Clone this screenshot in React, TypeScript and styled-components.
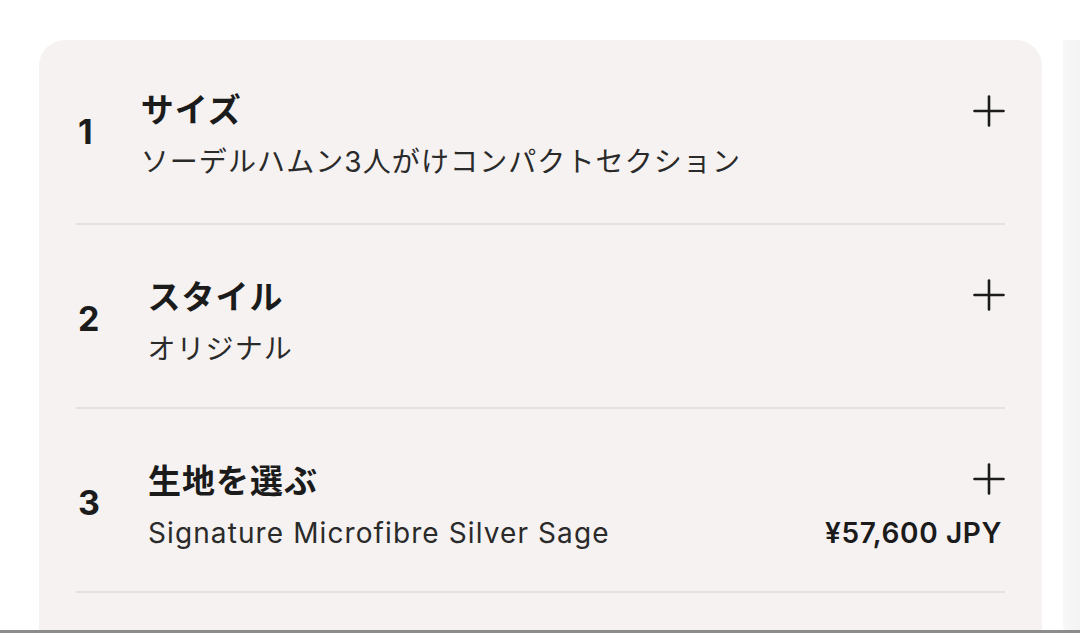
import React from "react"
import styled, { createGlobalStyle } from "styled-components"

const GlobalStyle = createGlobalStyle`
    html, body {
        margin: 0;
        padding: 0;
        background: #ffffff;
    }
    body {
        font-family: "Inter", "Noto Sans CJK JP", sans-serif;
        color: #1b1b1b;
    }
`

const Page = styled.div`
    width: 1080px;
    height: 633px;
    display: flex;
    flex-direction: column;
    overflow: hidden;
`

const Viewport = styled.div`
    flex-grow: 1;
    display: flex;
    flex-direction: row;
    overflow: hidden;
    padding-top: 40px;
`

const Panel = styled.div`
    width: 1003px;
    margin-left: 39px;
    padding: 0 37px;
    box-sizing: border-box;
    background: #f5f2f1;
    border-radius: 26px 26px 0 0;
`

const Gutter = styled.div`
    flex-grow: 1;
`

const Scrollbar = styled.div`
    width: 17px;
    background: linear-gradient(to right, #f8f8f8, #f3f3f3);
`

const BottomEdge = styled.div`
    height: 3px;
    background: #8c8c8c;
`

const Row = styled.div<{ $first?: boolean }>`
    display: flex;
    flex-direction: row;
    align-items: center;
    gap: 48px;
    padding: ${(p) => (p.$first ? "46px 0 39px" : "48px 0 36px")};
    border-bottom: 2px solid #e4e1e0;
`

const Step = styled.div`
    font-family: "Inter", sans-serif;
    font-weight: 700;
    font-size: 34px;
    line-height: 40px;
    padding-left: 2px;
    margin-top: -6px;
`

const Body = styled.div`
    flex-grow: 1;
    display: flex;
    flex-direction: column;
    gap: 10px;
`

const Line = styled.div`
    display: flex;
    flex-direction: row;
    justify-content: space-between;
    align-items: center;
    height: 44px;
`

const Title = styled.div`
    font-family: "Noto Sans CJK JP", sans-serif;
    font-weight: 700;
    font-size: 33px;
    letter-spacing: 1px;
    line-height: 44px;
`

const Subtitle = styled.div`
    font-family: "Inter", "Noto Sans CJK JP", sans-serif;
    font-weight: 400;
    font-size: 28px;
    letter-spacing: 1.1px;
    line-height: 44px;
    color: #2a2a2a;
`

const Price = styled.div`
    font-family: "Inter", sans-serif;
    font-weight: 600;
    font-size: 28px;
    letter-spacing: 0.6px;
    line-height: 44px;
    margin-right: 3px;
`

const PlusWrap = styled.span<{ $drop?: number }>`
    display: flex;
    margin-top: ${(p) => p.$drop ?? 0}px;
`

const PlusIcon = ({ drop }: { drop?: number }) => (
    <PlusWrap $drop={drop}>
        <svg width="32" height="32" viewBox="0 0 32 32" fill="none">
            <path d="M16 1.5v29M1.5 16h29" stroke="#1b1b1b" strokeWidth="2.6" strokeLinecap="round" />
        </svg>
    </PlusWrap>
)

const steps = [
    { n: "1", title: "サイズ", sub: "ソーデルハムン3人がけコンパクトセクション", drop: 6 },
    { n: "2", title: "スタイル", sub: "オリジナル" },
    { n: "3", title: "生地を選ぶ", sub: "Signature Microfibre Silver Sage", price: "¥57,600 JPY" },
]

export default function App() {
    return (
        <Page>
            <GlobalStyle />
            <Viewport>
                <Panel>
                    {steps.map((s, i) => (
                        <Row key={s.n} $first={i === 0}>
                            <Step>{s.n}</Step>
                            <Body>
                                <Line>
                                    <Title>{s.title}</Title>
                                    <PlusIcon drop={s.drop} />
                                </Line>
                                <Line>
                                    <Subtitle>{s.sub}</Subtitle>
                                    {s.price && <Price>{s.price}</Price>}
                                </Line>
                            </Body>
                        </Row>
                    ))}
                </Panel>
                <Gutter />
                <Scrollbar />
            </Viewport>
            <BottomEdge />
        </Page>
    )
}
